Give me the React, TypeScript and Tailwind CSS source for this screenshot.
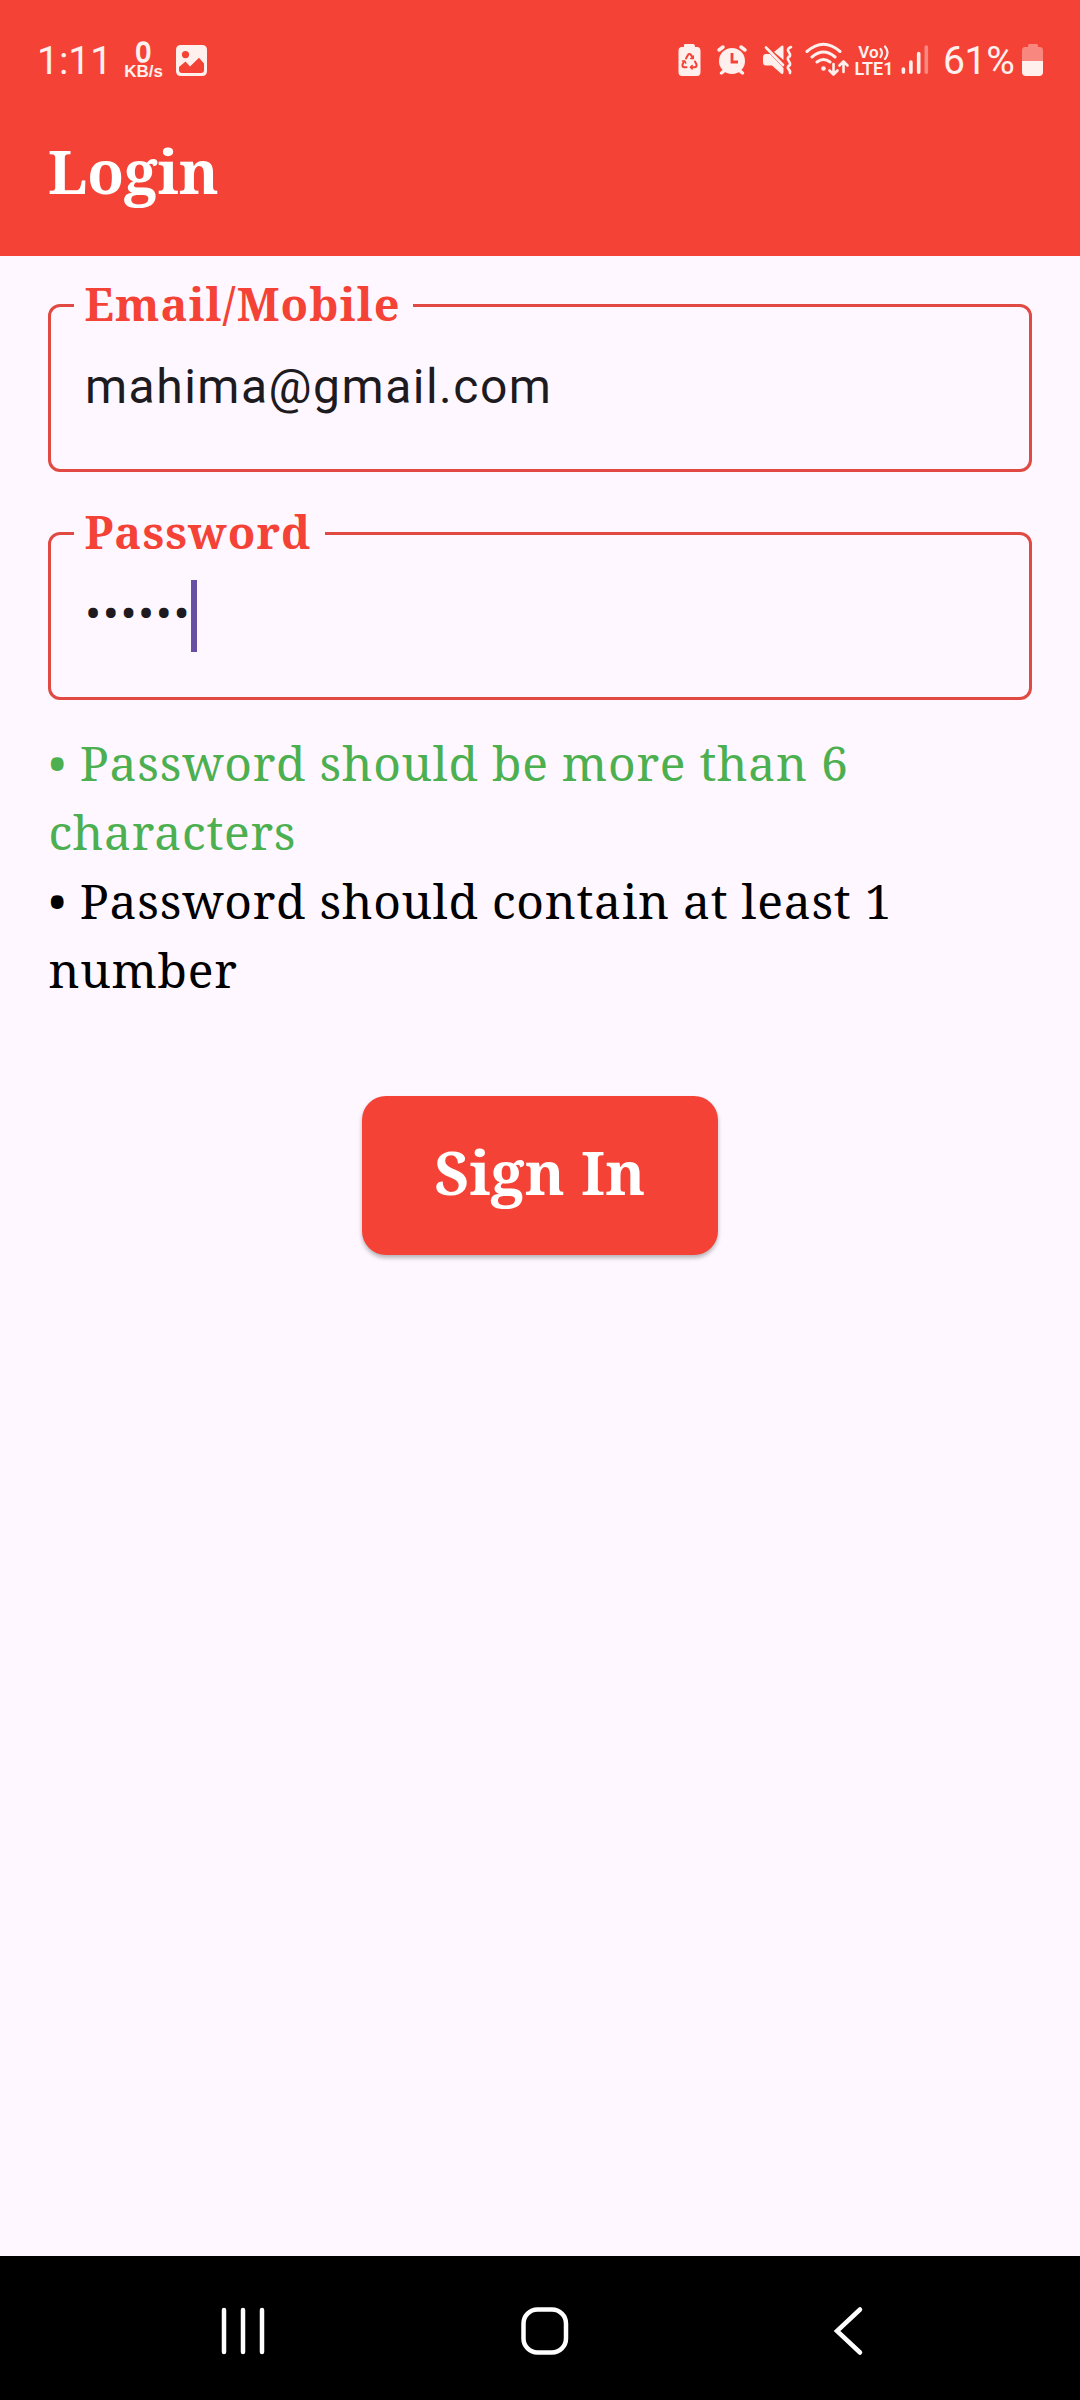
import type { ReactNode } from "react";

const serif = "font-['Noto_Serif','DejaVu_Serif',serif]";

function StatusBar() {
  return (
    <div className="flex h-[120px] items-start pt-[40px] font-[Roboto,sans-serif] text-[#fff0ee]">
      <div className="ml-[37px] h-10 w-[81px] whitespace-nowrap pt-[3px] text-[39px] leading-[36px]">1:11</div>
      <div className="ml-[5px] flex h-10 w-[41px] flex-col items-center font-['Liberation_Sans',sans-serif]">
        <span className="h-[26px] scale-x-90 text-[30px] leading-[24px] [-webkit-text-stroke:1.5px]">0</span>
        <span className="whitespace-nowrap text-[17px] font-bold leading-[16px]">KB/s</span>
      </div>
      <svg className="ml-[12px] h-10 w-8" viewBox="0 0 32 40" fill="currentColor">
        <path fillRule="evenodd" d="M5 5H26Q31 5 31 10V31Q31 36 26 36H5Q0 36 0 31V10Q0 5 5 5ZM9.500 11A3.600 3.600 0 1 0 9.500 18.200A3.600 3.600 0 1 0 9.500 11ZM3 27V30Q3 33 6 33H25Q28 33 28 30V23.500L23 17.700L14 26.500L9.500 21.500Z" />
      </svg>
      <div className="grow" />
      <svg className="h-10 w-[23px]" viewBox="0 0 23 40">
        <path fill="currentColor" d="M7 4H15Q17 4 17 7H19Q22.500 7 22.500 11V32Q22.500 36 19 36H4Q.500 36 .500 32V11Q.500 7 4 7H6Q5.500 4 7 4Z" />
        <g fill="none" stroke="#f44336" strokeWidth="2" strokeLinejoin="round" strokeLinecap="round">
          <path d="M8 18.500L9.800 15.200Q11.500 13 13.200 15.200L14.800 18.300" />
          <path d="M6 21.500L4.600 24.300Q3.800 27 6.500 27.300H8.500" />
          <path d="M17 21.500L18.400 24.300Q19.200 27 16.500 27.300H13" />
          <path strokeWidth="1.600" d="M12.800 18.500H15.200V16M4.500 21H6.800L7.700 23M14.200 25.500L12.500 27.300L14.200 29" />
        </g>
      </svg>
      <svg className="ml-[15px] h-10 w-[32px]" viewBox="0 0 32 40" fill="none" stroke="currentColor" strokeLinecap="round">
        <circle cx="16" cy="21" r="13" fill="currentColor" stroke="none" />
        <path strokeWidth="3.500" d="M3 10L7 7M29 10L25 7M8 31L5.500 33M24 31L26.500 33" />
        <path stroke="#f44336" strokeWidth="2.800" strokeLinecap="butt" d="M16 13V22H22" />
      </svg>
      <svg className="ml-[14px] h-10 w-[32px]" viewBox="0 0 32 40" fill="currentColor">
        <path d="M12 12L20 5.500Q21.500 5 21.500 7V20Z" />
        <path d="M4 14H8L21.500 28V32Q21.500 35 19 33.500L10 25.500H4Q1 25.500 1 22V17Q1 14 4 14Z" />
        <path fill="none" stroke="currentColor" strokeWidth="2.600" strokeLinecap="round" d="M4 7.500L21 25" />
        <path fill="none" stroke="currentColor" strokeWidth="2.600" strokeLinecap="round" strokeLinejoin="round" d="M29 7Q24.500 9 26.500 11.500T28 16Q24.500 18 26.500 20.500T28 25Q24.500 27 26.500 29T28 33" />
      </svg>
      <svg className="ml-[11px] h-10 w-[46px]" viewBox="0 0 46 40" fill="none" stroke="currentColor" strokeWidth="3" strokeLinecap="round">
        <path d="M2 11.500Q18.500-3 35 11.500M7 17Q18.500 7 30 17M12 22Q18.500 17 25 22" />
        <circle cx="18.500" cy="28.500" r="2.300" fill="currentColor" stroke="none" />
        <path strokeWidth="2.600" strokeLinejoin="round" d="M28.500 24V34M24.500 30.500L28.500 34.500L32.500 30.500M38.500 32V22M34.500 25.500L38.500 21.500L42.500 25.500" />
      </svg>
      <div className="ml-[2px] flex h-10 w-[42px] flex-col items-center pt-[4px] font-semibold">
        <div className="flex h-[16px] items-center">
          <span className="text-[17px] leading-[15px]">Vo</span>
          <svg className="h-[15px] w-[11px]" viewBox="0 0 11 15" fill="none" stroke="currentColor" strokeWidth="2.200" strokeLinecap="round">
            <path d="M1.500 4Q4.500 7.500 1.500 12M6 1.500Q11 7.500 6 14" />
          </svg>
        </div>
        <span className="text-[18px] leading-[18px]">LTE1</span>
      </div>
      <svg className="ml-[6px] h-10 w-[28px]" viewBox="0 0 28 40" stroke="currentColor" strokeWidth="3.600" strokeLinecap="round">
        <path d="M2.400 29V32.300M9.900 22V32.300M17.700 13.500V32.300" />
        <path opacity=".4" d="M25.300 7V32.300" />
      </svg>
      <div className="ml-[14px] h-10 w-[75px] whitespace-nowrap pt-[2px] text-[39px] leading-[38px] -tracking-[0.3px]">61%</div>
      <svg className="ml-[4px] mr-[36px] h-10 w-[22px]" viewBox="0 0 22 40" fill="currentColor">
        <path opacity=".4" d="M7 4H15Q16 4 16 7H18Q21 7 21 11V21H0V11Q0 7 3 7H6Q6 4 7 4Z" />
        <path d="M0 21H21V32Q21 36 17 36H4Q0 36 0 32Z" />
      </svg>
    </div>
  );
}

function Field({ label, labelWidth, children }: { label: string; labelWidth: string; children: ReactNode }) {
  return (
    <div className="relative h-[168px] rounded-[12px] border-[3px] border-[#e04a42] pl-[34px] pt-[45px]">
      <div className={`absolute -top-[30px] left-[23px] h-[54px] bg-[#fef7ff] pl-[10.5px] ${labelWidth}`}>
        <span className={`block whitespace-nowrap text-[45px] font-bold leading-[54px] tracking-[1.125px] text-[#f44336] ${serif}`}>{label}</span>
      </div>
      {children}
    </div>
  );
}

export default function App() {
  return (
    <div className="flex h-[2400px] w-[1080px] flex-col overflow-hidden bg-[#fef7ff]">
      <header className="h-[256px] shrink-0 bg-[#f44336]">
        <StatusBar />
        <h1 className={`pl-[48px] pt-[11px] text-[60px] font-bold leading-[80px] text-white ${serif}`}>Login</h1>
      </header>
      <main className="flex grow flex-col px-[48px] pt-[48px]">
        <Field label="Email/Mobile" labelWidth="w-[339px]">
          <div className="font-[Roboto,sans-serif] text-[48px] leading-[70px] tracking-[1.5px] text-[#1d1b20]">mahima@gmail.com</div>
        </Field>
        <div className="h-[60px]" />
        <Field label="Password" labelWidth="w-[251px]">
          <div className="flex h-[72px] items-start font-[Roboto,sans-serif] text-[48px] leading-[70px] tracking-[1.5px] text-[#1d1b20]">
            <span>••••••</span>
            <span className="h-[72px] w-[6px] bg-[#6750a4]" />
          </div>
        </Field>
        <div className={`mt-[28px] whitespace-nowrap pl-[0.5px] text-[48px] leading-[69px] tracking-[0.75px] ${serif}`}>
          <p className="text-[#4caf50]">• Password should be more than 6<br />characters</p>
          <p className="text-black">• Password should contain at least 1<br />number</p>
        </div>
        <button className={`mt-[92px] h-[159px] w-[356px] self-center rounded-[24px] bg-[#f44336] pb-[8px] text-[60px] font-bold tracking-[0.3px] text-white shadow-[0_3px_4px_rgba(0,0,0,0.28)] ${serif}`}>Sign In</button>
      </main>
      <nav className="flex h-[144px] shrink-0 items-center justify-between bg-black pl-[218px] pr-[215px] pt-[6px] text-white">
        <svg className="h-[50px] w-[50px]" viewBox="0 0 50 50" stroke="currentColor" strokeWidth="4.500" strokeLinecap="round">
          <path d="M6 4V46M25 4V46M44 4V46" />
        </svg>
        <svg className="ml-[6px] h-[50px] w-[50px]" viewBox="0 0 50 50" fill="none" stroke="currentColor" strokeWidth="4.500">
          <rect x="3.500" y="3.500" width="42.500" height="43" rx="14" />
        </svg>
        <svg className="h-[50px] w-[50px]" viewBox="0 0 50 50" fill="none" stroke="currentColor" strokeWidth="4.500" strokeLinecap="round">
          <path d="M45 3.500L22 25L45 46.500" />
        </svg>
      </nav>
    </div>
  );
}
